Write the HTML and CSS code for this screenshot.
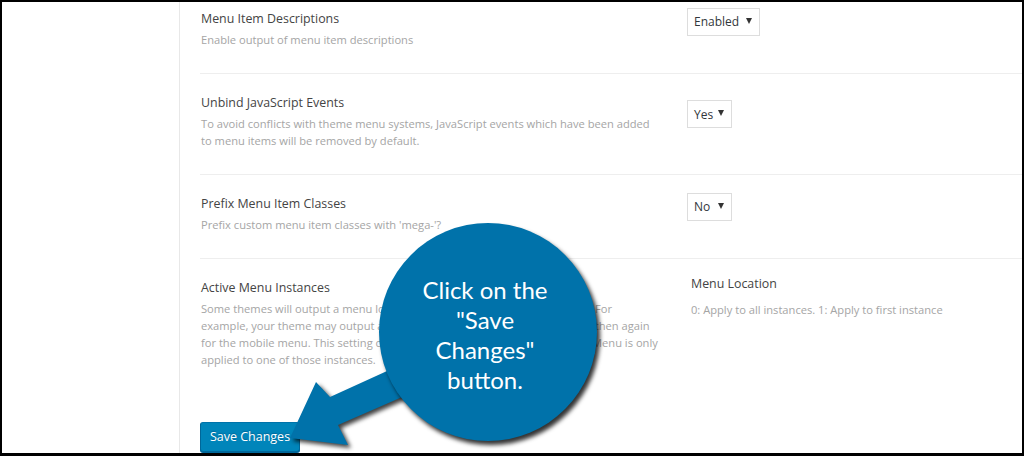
FILE: index.html
```html
<!DOCTYPE html>
<html lang="en">
<head>
<meta charset="utf-8">
<title>Menu Settings</title>
<link rel="stylesheet" href="styles.css">
</head>
<body>
<div class="frame">
  <aside class="sidebar"></aside>
  <main class="content">
    <div class="settings">
      <div class="row">
        <div class="label">
          <h3>Menu Item Descriptions</h3>
          <p class="desc">Enable output of menu item descriptions</p>
        </div>
        <div class="control">
          <div class="select select-wide"><span>Enabled</span><span class="caret"></span></div>
        </div>
      </div>
      <div class="row">
        <div class="label">
          <h3>Unbind JavaScript Events</h3>
          <p class="desc">To avoid conflicts with theme menu systems, JavaScript events which have been added<br>to menu items will be removed by default.</p>
        </div>
        <div class="control">
          <div class="select"><span>Yes</span><span class="caret"></span></div>
        </div>
      </div>
      <div class="row">
        <div class="label">
          <h3>Prefix Menu Item Classes</h3>
          <p class="desc">Prefix custom menu item classes with 'mega-'?</p>
        </div>
        <div class="control">
          <div class="select"><span>No</span><span class="caret"></span></div>
        </div>
      </div>
      <div class="row row-last">
        <div class="label">
          <h3>Active Menu Instances</h3>
          <p class="desc">Some themes will output a menu location multiple times on the same page. For<br>example, your theme may output a menu location once for the main menu, then again<br>for the mobile menu. This setting can be used to make sure that Max Mega Menu is only<br>applied to one of those instances.</p>
        </div>
        <div class="control control-top">
          <div class="sub-label">Menu Location</div>
          <p class="sub-desc">0: Apply to all instances. 1: Apply to first instance</p>
        </div>
      </div>
    </div>
    <div class="submit">
      <button class="button-primary" type="button">Save Changes</button>
    </div>
  </main>

  <svg class="arrow" width="1020" height="451" viewBox="0 0 1020 451" aria-hidden="true">
    <polygon points="288,436 314,380 328,395 418,354 430,382 336,423 346,443" fill="#0072aa"/>
  </svg>
  <div class="bubble">
    <p>Click on the<br>"Save<br>Changes"<br>button.</p>
  </div>
</div>
</body>
</html>
```

FILE: styles.css
```css
* { box-sizing: border-box; }

html, body {
  margin: 0;
  padding: 0;
}

body {
  width: 1024px;
  height: 456px;
  background: #000;
  overflow: hidden;
  font-family: "Open Sans", "Noto Sans", sans-serif;
}

.frame {
  position: relative;
  margin: 2px 2px 0 2px;
  height: 451px;
  background: #fff;
  display: flex;
  overflow: hidden;
}

.sidebar {
  flex: none;
  width: 178px;
  border-right: 1px solid #e8e8e8;
}

.content {
  flex: 1;
  padding-left: 20px;
  min-width: 0;
}

.settings {
  margin-top: -12px;
}

.row {
  display: grid;
  grid-template-columns: 487px 1fr;
  border-bottom: 1px solid #eeeeee;
}

.row-last {
  border-bottom: none;
}

.label {
  padding: 18px 0 25px 1px;
}

.label h3 {
  margin: 0;
  padding-top: 1px;
  font-size: 12.4px;
  line-height: 20px;
  font-weight: 400;
  color: #444;
}

.desc {
  margin: 2px 0 0;
  font-size: 11.15px;
  line-height: 17px;
  color: #a5a5a5;
  white-space: nowrap;
}

.control {
  align-self: center;
  padding-bottom: 20px;
}

.control-top {
  align-self: start;
  padding: 15px 0 0 4px;
}

.select {
  display: flex;
  align-items: center;
  justify-content: space-between;
  width: 45px;
  height: 28px;
  padding: 0 7px 0 6px;
  border: 1px solid #dddddd;
  background: #fff;
  font-size: 12px;
  color: #32373c;
}

.select-wide {
  width: 73px;
}

.caret {
  width: 0;
  height: 0;
  border-left: 3px solid transparent;
  border-right: 3px solid transparent;
  border-top: 6px solid #333;
  margin-bottom: 2px;
}

.sub-label {
  font-size: 12.4px;
  line-height: 20px;
  color: #444;
}

.sub-desc {
  margin: 7px 0 0;
  font-size: 11.15px;
  line-height: 17px;
  color: #a5a5a5;
}

.submit {
  padding-top: 29px;
}

.button-primary {
  width: 100px;
  height: 30px;
  padding: 0 0 2px;
  border: 1px solid;
  border-color: #0073aa #006799 #006799;
  border-radius: 3px;
  background: #0085ba;
  box-shadow: 0 1px 0 #006799;
  color: #fff;
  font-family: "Open Sans", "Noto Sans", sans-serif;
  font-size: 12.5px;
  text-shadow: 0 -1px 1px #006799;
}

.arrow {
  position: absolute;
  left: 0;
  top: 0;
  pointer-events: none;
  filter: drop-shadow(3px 3px 2px rgba(0, 0, 0, 0.75));
}

.bubble {
  position: absolute;
  left: 377px;
  top: 221px;
  width: 218px;
  height: 218px;
  border-radius: 50%;
  background: #0072aa;
  box-shadow: 3px 4px 4px rgba(0, 0, 0, 0.8);
  display: flex;
  align-items: center;
  justify-content: center;
  padding: 6px 6px 0 0;
}

.bubble p {
  margin: 0;
  text-align: center;
  color: #fff;
  font-family: "Lato", "Open Sans", sans-serif;
  font-size: 24px;
  line-height: 30px;
}
```
